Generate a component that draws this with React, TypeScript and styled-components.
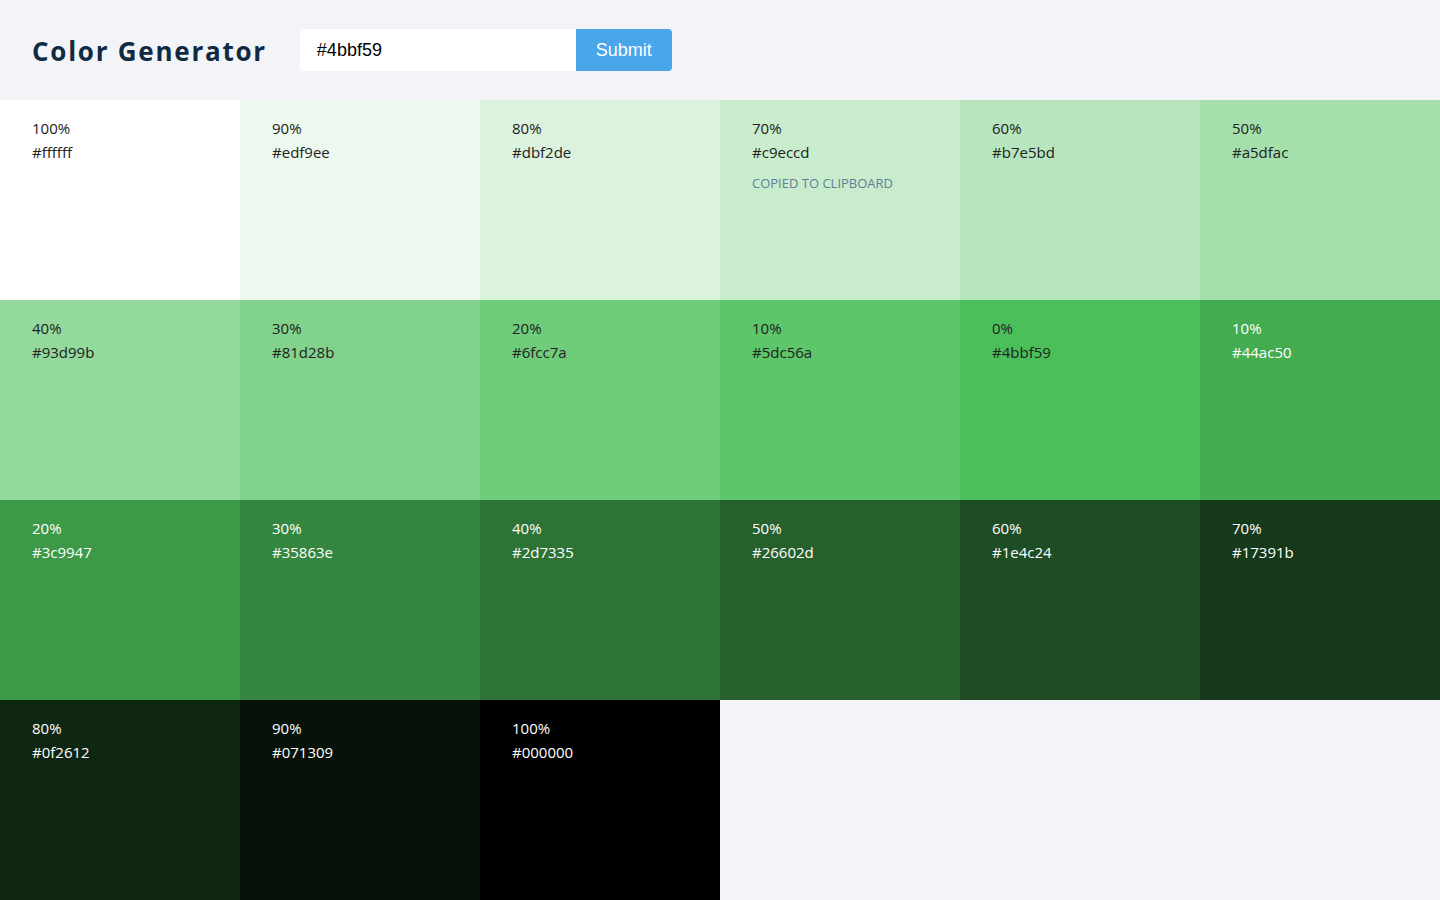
import styled, { createGlobalStyle } from 'styled-components';
import { useState } from 'react';

const GlobalStyle = createGlobalStyle`
  * { box-sizing: border-box; margin: 0; padding: 0; }
  body {
    background: #f2f4f8;
    font-family: 'Open Sans', 'Noto Sans', sans-serif;
    color: #102a42;
  }
`;

const colors = [
  { weight: 100, hex: 'ffffff' },
  { weight: 90, hex: 'edf9ee' },
  { weight: 80, hex: 'dbf2de' },
  { weight: 70, hex: 'c9eccd' },
  { weight: 60, hex: 'b7e5bd' },
  { weight: 50, hex: 'a5dfac' },
  { weight: 40, hex: '93d99b' },
  { weight: 30, hex: '81d28b' },
  { weight: 20, hex: '6fcc7a' },
  { weight: 10, hex: '5dc56a' },
  { weight: 0, hex: '4bbf59' },
  { weight: 10, hex: '44ac50' },
  { weight: 20, hex: '3c9947' },
  { weight: 30, hex: '35863e' },
  { weight: 40, hex: '2d7335' },
  { weight: 50, hex: '26602d' },
  { weight: 60, hex: '1e4c24' },
  { weight: 70, hex: '17391b' },
  { weight: 80, hex: '0f2612' },
  { weight: 90, hex: '071309' },
  { weight: 100, hex: '000000' },
];

const App = () => {
  const [value, setValue] = useState('#4bbf59');
  const [copied, setCopied] = useState(3);

  return (
    <>
      <GlobalStyle />
      <Header>
        <Title>Color Generator</Title>
        <Form onSubmit={(e) => e.preventDefault()}>
          <Input value={value} onChange={(e) => setValue(e.target.value)} />
          <Button type="submit">Submit</Button>
        </Form>
      </Header>
      <Grid>
        {colors.map((c, i) => (
          <Swatch
            key={i}
            style={{ background: `#${c.hex}` }}
            $light={i > 10}
            onClick={() => setCopied(i)}
          >
            <Line>{c.weight}%</Line>
            <Line>#{c.hex}</Line>
            {copied === i && <Alert>copied to clipboard</Alert>}
          </Swatch>
        ))}
      </Grid>
    </>
  );
};

const Header = styled.section`
  height: 100px;
  display: flex;
  align-items: center;
  padding: 0 32px;
`;

const Title = styled.h3`
  font-family: 'Open Sans', sans-serif;
  font-size: 26px;
  font-weight: 700;
  letter-spacing: 1.75px;
  color: #102a42;
  margin-right: 33px;
  margin-top: 2px;
`;

const Form = styled.form`
  display: flex;
  height: 42px;
`;

const Input = styled.input`
  width: 276px;
  height: 100%;
  border: none;
  outline: none;
  background: #ffffff;
  border-radius: 4px 0 0 4px;
  padding: 0 17px;
  font-family: 'Liberation Sans', Arial, sans-serif;
  font-size: 18px;
  color: #000;
`;

const Button = styled.button`
  width: 96px;
  height: 100%;
  border: none;
  background: #49a6e9;
  color: #ffffff;
  border-radius: 0 4px 4px 0;
  font-family: 'Liberation Sans', Arial, sans-serif;
  font-size: 18px;
  cursor: pointer;
`;

const Grid = styled.section`
  display: grid;
  grid-template-columns: repeat(6, 1fr);
  grid-auto-rows: 200px;
`;

const Swatch = styled.article<{ $light: boolean }>`
  padding: 16px 32px;
  cursor: pointer;
  color: ${({ $light }) => ($light ? '#ffffff' : '#222222')};
  font-size: 15px;
`;

const Line = styled.p`
  line-height: 24px;
`;

const Alert = styled.p`
  margin-top: 10px;
  font-size: 13px;
  text-transform: uppercase;
  color: #617d98;
`;

export default App;
